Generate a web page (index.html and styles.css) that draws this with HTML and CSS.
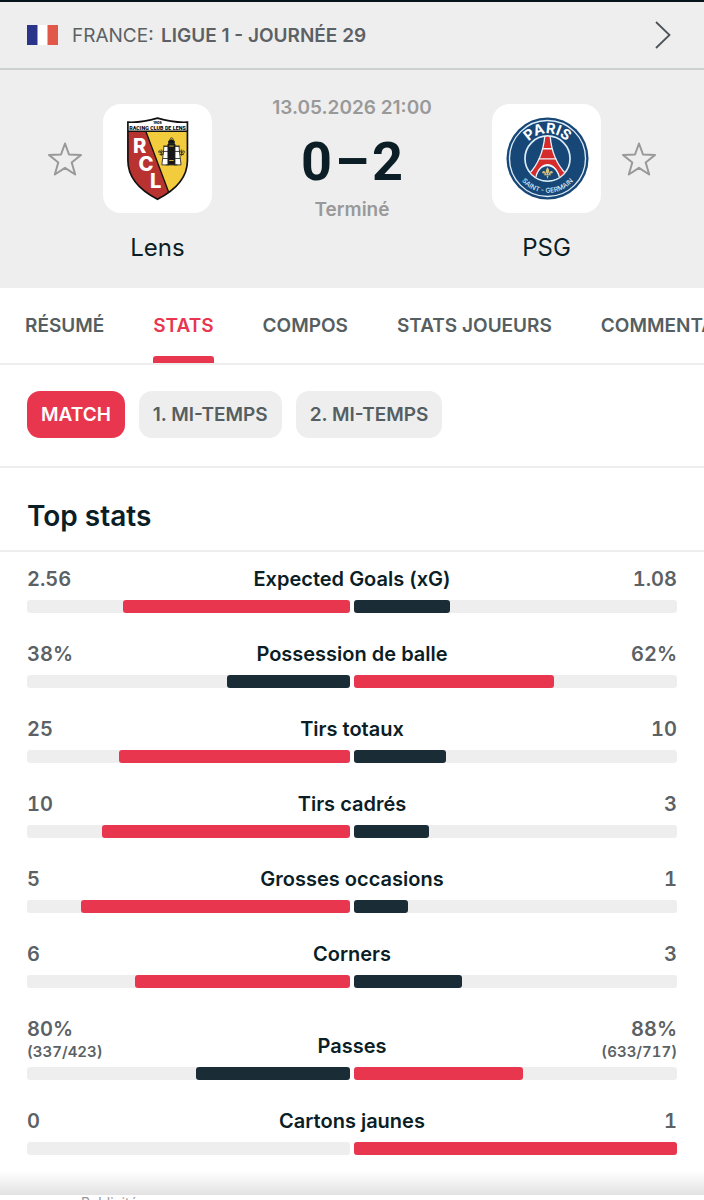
FILE: index.html
```html
<!DOCTYPE html>
<html lang="fr">
<head>
    <meta charset="UTF-8">
    <meta name="viewport" content="width=device-width, initial-scale=1.0">
    <title>Lens - PSG</title>
    <link rel="stylesheet" href="styles.css">
</head>
<body>
    <div class="page">
        <a href="#" class="league">
            <svg class="flag" viewBox="0 0 31 20" aria-hidden="true">
                <rect width="31" height="20" fill="#fff"/>
                <rect width="10.5" height="20" fill="#2b348b"/>
                <rect x="20.5" width="10.5" height="20" fill="#e1574a"/>
            </svg>
            <span class="league-name">FRANCE: <b>LIGUE 1 - JOURNÉE 29</b></span>
            <svg class="chevron" viewBox="0 0 18 30" aria-hidden="true">
                <path d="M2 2 L15.500 15 L2 28" fill="none" stroke="#4d5358" stroke-width="1.800"/>
            </svg>
        </a>

        <header class="match">
            <button class="star" aria-label="Suivre Lens">
                <svg viewBox="0 0 36 36"><path d="M18 2.500 L22 13.500 L34 14 L24.700 21.500 L28.200 33.500 L18 26.800 L7.800 33.500 L11.300 21.500 L2 14 L14 13.500 Z"/></svg>
            </button>
            <div class="team">
                <div class="logo">
                    <svg viewBox="9 12 324 324" aria-hidden="true">
                        <defs>
                            <clipPath id="shield">
                                <path d="M83 66 Q125 68 171 54 Q217 68 260 66 V180 Q260 250 171 295 Q83 250 83 180 Z"/>
                            </clipPath>
                        </defs>
                        <g clip-path="url(#shield)">
                            <rect x="80" y="50" width="184" height="250" fill="#f3cc3d"/>
                            <path d="M80 92 H136 L206 280 L171 300 H80 Z" fill="#b8322f"/>
                            <path d="M136 92 L207 282" stroke="#111" stroke-width="4"/>
                            <rect x="80" y="50" width="184" height="42" fill="#fff"/>
                            <path d="M80 93 H264" stroke="#111" stroke-width="4"/>
                        </g>
                        <path d="M83 66 Q125 68 171 54 Q217 68 260 66 V180 Q260 250 171 295 Q83 250 83 180 Z" fill="none" stroke="#111" stroke-width="5"/>
                        <text x="171" y="71" class="crest-year">1906</text>
                        <text x="171" y="88" class="crest-name">RACING CLUB DE LENS</text>
                        <g class="crest-letters">
                            <text x="118" y="158">R</text>
                            <text x="137" y="212">C</text>
                            <text x="166" y="263">L</text>
                        </g>
                        <!-- miner's lamp between two pit towers -->
                        <g stroke="#222" stroke-width="2.500">
                            <path d="M190 138 H205 V193 H184 L188 160 Z M220 138 H235 L237 160 L241 193 H220 Z" fill="#fff"/>
                            <path d="M188 137 H207 M219 137 H238 M190 153 H203 M222 153 H236 M187 174 H202 M223 174 H238" fill="none"/>
                            <path d="M204 122 Q212 114 221 122 V130 H204 Z M202 131 H223 V192 H202 Z" fill="#161616"/>
                            <path d="M207 118 Q213 107 219 118 M196 193 H230" fill="none"/>
                            <path d="M206 137 H219 M206 180 H219" stroke="#f3cc3d"/>
                            <path d="M182 147 V166 M176 158 Q172 150 178 151 L182 158 L187 151 Q192 152 187 160 M243 147 V166 M237 158 Q233 150 239 151 L243 158 L248 151 Q254 152 248 160" fill="none"/>
                            <path d="M177 162 H188 M238 162 H249" fill="none"/>
                        </g>
                    </svg>
                </div>
                <a href="#" class="team-name">Lens</a>
            </div>

            <div class="result">
                <div class="date">13.05.2026 21:00</div>
                <div class="score"><span>0</span><span>–</span><span>2</span></div>
                <div class="status">Terminé</div>
            </div>

            <div class="team">
                <div class="logo">
                    <svg viewBox="6 12 324 324" aria-hidden="true">
                        <defs>
                            <path id="arc-top" d="M96 174 A75 75 0 0 1 246 174"/>
                            <path id="arc-bottom" d="M69 174 A102 102 0 0 0 273 174"/>
                            <clipPath id="inner"><circle cx="171" cy="174" r="65"/></clipPath>
                        </defs>
                        <circle cx="171" cy="174" r="122" fill="#174777"/>
                        <circle cx="171" cy="174" r="113" fill="none" stroke="#dcecf8" stroke-width="4"/>
                        <circle cx="171" cy="174" r="67" fill="#174777" stroke="#dcecf8" stroke-width="5"/>
                        <g clip-path="url(#inner)">
                            <path d="M163 108 H179 C182 148 197 190 226 220 L205 236 C200 178 142 178 138 236 L116 220 C145 190 159 148 163 108 Z" fill="#d52b2b" stroke="#eaf2fa" stroke-width="4"/>
                            <path d="M157 145 H185 M145 175 H197" stroke="#eaf2fa" stroke-width="4"/>
                            <path d="M135 242 C137 179 204 179 208 242 Z" fill="#174777" stroke="#eaf2fa" stroke-width="4"/>
                        </g>
                        <!-- fleur-de-lis -->
                        <path d="M171 200 Q162 211 169 219 Q171 222 173 219 Q180 211 171 200 Z M167 220 Q165 209 157 212 Q152 217 160 219 Q158 213 164 221 Z M175 220 Q177 209 185 212 Q190 217 182 219 Q184 213 178 221 Z M161 221 H181 V224 H161 Z M168 225 H174 L171 235 Z" fill="#d8c17b"/>
                        <text class="psg-top"><textPath href="#arc-top" startOffset="50%">PARIS</textPath></text>
                        <text class="psg-bottom"><textPath href="#arc-bottom" startOffset="50%">SAINT - GERMAIN</textPath></text>
                    </svg>
                </div>
                <a href="#" class="team-name">PSG</a>
            </div>
            <button class="star" aria-label="Suivre PSG">
                <svg viewBox="0 0 36 36"><path d="M18 2.500 L22 13.500 L34 14 L24.700 21.500 L28.200 33.500 L18 26.800 L7.800 33.500 L11.300 21.500 L2 14 L14 13.500 Z"/></svg>
            </button>
        </header>

        <nav class="tabs">
            <a href="#">RÉSUMÉ</a>
            <a href="#" class="active">STATS</a>
            <a href="#">COMPOS</a>
            <a href="#">STATS JOUEURS</a>
            <a href="#">COMMENTAIRES</a>
        </nav>

        <div class="periods">
            <button class="selected">MATCH</button>
            <button>1. MI-TEMPS</button>
            <button>2. MI-TEMPS</button>
        </div>

        <h2>Top stats</h2>

        <section class="stats">
            <div class="stat">
                <div class="stat-head"><span class="value">2.56</span><span class="label">Expected Goals (xG)</span><span class="value">1.08</span></div>
                <div class="bars">
                    <div class="track home"><div class="fill best" style="width: 70.3%"></div></div>
                    <div class="track"><div class="fill" style="width: 29.7%"></div></div>
                </div>
            </div>
            <div class="stat">
                <div class="stat-head"><span class="value">38%</span><span class="label">Possession de balle</span><span class="value">62%</span></div>
                <div class="bars">
                    <div class="track home"><div class="fill" style="width: 38%"></div></div>
                    <div class="track"><div class="fill best" style="width: 62%"></div></div>
                </div>
            </div>
            <div class="stat">
                <div class="stat-head"><span class="value">25</span><span class="label">Tirs totaux</span><span class="value">10</span></div>
                <div class="bars">
                    <div class="track home"><div class="fill best" style="width: 71.4%"></div></div>
                    <div class="track"><div class="fill" style="width: 28.6%"></div></div>
                </div>
            </div>
            <div class="stat">
                <div class="stat-head"><span class="value">10</span><span class="label">Tirs cadrés</span><span class="value">3</span></div>
                <div class="bars">
                    <div class="track home"><div class="fill best" style="width: 76.9%"></div></div>
                    <div class="track"><div class="fill" style="width: 23.1%"></div></div>
                </div>
            </div>
            <div class="stat">
                <div class="stat-head"><span class="value">5</span><span class="label">Grosses occasions</span><span class="value">1</span></div>
                <div class="bars">
                    <div class="track home"><div class="fill best" style="width: 83.3%"></div></div>
                    <div class="track"><div class="fill" style="width: 16.7%"></div></div>
                </div>
            </div>
            <div class="stat">
                <div class="stat-head"><span class="value">6</span><span class="label">Corners</span><span class="value">3</span></div>
                <div class="bars">
                    <div class="track home"><div class="fill best" style="width: 66.7%"></div></div>
                    <div class="track"><div class="fill" style="width: 33.3%"></div></div>
                </div>
            </div>
            <div class="stat">
                <div class="stat-head"><span class="value">80% <small>(337/423)</small></span><span class="label">Passes</span><span class="value">88% <small>(633/717)</small></span></div>
                <div class="bars">
                    <div class="track home"><div class="fill" style="width: 47.7%"></div></div>
                    <div class="track"><div class="fill best" style="width: 52.3%"></div></div>
                </div>
            </div>
            <div class="stat">
                <div class="stat-head"><span class="value">0</span><span class="label">Cartons jaunes</span><span class="value">1</span></div>
                <div class="bars">
                    <div class="track home"></div>
                    <div class="track"><div class="fill best" style="width: 100%"></div></div>
                </div>
            </div>
        </section>

        <footer class="ad">Publicité</footer>
    </div>
</body>
</html>
```
FILE: styles.css
```css
* {
    box-sizing: border-box;
}

body {
    margin: 0;
    font-family: Inter, Roboto, "Liberation Sans", sans-serif;
    font-size: 19px;
    color: #0b1e26;
    background: #fff;
}

a {
    color: inherit;
    text-decoration: none;
}

button {
    font: inherit;
    border: none;
    cursor: pointer;
}

.page {
    height: 100vh;
    overflow: hidden;
    border-top: 2px solid #06141c;
}

/* league bar */
.league {
    display: flex;
    align-items: center;
    height: 68px;
    padding: 0 32px 0 27px;
    background: #eee;
    border-bottom: 2px solid #cdd0d1;
    color: #5b6164;
}

.flag {
    width: 31px;
    height: 20px;
    margin-right: 14px;
}

.league-name {
    flex: 1;
}

.league-name b {
    font-weight: 600;
    margin-left: 2px;
}

.chevron {
    width: 18px;
    height: 30px;
}

/* match header */
.match {
    display: flex;
    align-items: flex-start;
    gap: 20px;
    height: 218px;
    padding: 34px 47px 0;
    background: #eee;
}

.star {
    flex-shrink: 0;
    width: 36px;
    height: 36px;
    margin-top: 37px;
    padding: 0;
    background: none;
}

.star svg {
    display: block;
    fill: none;
    stroke: #999;
    stroke-width: 2;
    stroke-linejoin: round;
}

.team {
    display: flex;
    flex-direction: column;
    align-items: center;
    gap: 20px;
}

.logo {
    width: 109px;
    height: 109px;
    border-radius: 18px;
    background: #fff;
}

.logo svg {
    display: block;
}

.team-name {
    font-size: 24px;
    line-height: 30px;
}

.crest-year,
.crest-name,
.crest-letters,
.psg-top,
.psg-bottom {
    text-anchor: middle;
    font-weight: 800;
}

.crest-year {
    font-size: 10px;
}

.crest-name {
    font-family: Roboto, sans-serif;
    font-size: 16px;
}

.crest-letters {
    font-size: 60px;
    fill: #fff;
}

.psg-top {
    font-size: 43px;
    font-weight: 700;
    fill: #fff;
}

.psg-bottom {
    font-size: 20px;
    font-weight: 500;
    fill: #dcecf8;
}

.result {
    flex: 1;
    margin-top: -8px;
    text-align: center;
    font-weight: 600;
    line-height: 24px;
    color: #999;
}

.score {
    display: flex;
    justify-content: center;
    align-items: center;
    gap: 3px;
    height: 78px;
    padding-top: 6px;
    font-family: Roboto, sans-serif;
    font-size: 54px;
    font-weight: 700;
    color: #0b1e26;
}

/* tabs */
.tabs {
    display: flex;
    gap: 49px;
    height: 77px;
    padding: 0 25px;
    border-bottom: 2px solid #eee;
    overflow: hidden;
    font-weight: 600;
    white-space: nowrap;
    color: #555e61;
}

.tabs a {
    flex-shrink: 0;
    padding-top: 7px;
    line-height: 61px;
}

.tabs .active {
    color: #e8364f;
}

.tabs .active::after {
    content: "";
    display: block;
    height: 7px;
    border-radius: 3px 3px 0 0;
    background: #e8364f;
}

/* period filter */
.periods {
    display: flex;
    gap: 14px;
    padding: 26px 27px 28px;
    border-bottom: 2px solid #eee;
}

.periods button {
    height: 47px;
    padding: 0 14px;
    border-radius: 13px;
    background: #eee;
    font-weight: 600;
    color: #555e61;
}

.periods .selected {
    background: #e8364f;
    color: #fff;
}

h2 {
    margin: 0;
    padding: 31px 27px 17px;
    border-bottom: 2px solid #eee;
    font-size: 28px;
    font-weight: 600;
    line-height: 34px;
}

/* stats */
.stats {
    display: flex;
    flex-direction: column;
    gap: 28px;
    padding: 14px 27px 40px;
    background: linear-gradient(to top, #e2e2e2, #fff 24px);
}

.stat {
    display: flex;
    flex-direction: column;
    gap: 5px;
}

.stat-head {
    display: grid;
    grid-template-columns: 1fr auto 1fr;
    align-items: end;
    min-height: 29px;
    font-size: 20px;
    font-weight: 600;
    line-height: 26px;
}

.value {
    align-self: start;
    font-variant-numeric: tabular-nums;
    color: #5b6164;
}

.value:last-child {
    text-align: right;
}

.value small {
    display: block;
    font-size: 15px;
    line-height: 20px;
}

.label {
    padding-bottom: 3px;
}

.bars {
    display: grid;
    grid-template-columns: 1fr 1fr;
    gap: 4px;
}

.track {
    display: flex;
    height: 13px;
    border-radius: 3px;
    background: #eee;
}

.track.home {
    justify-content: flex-end;
}

.fill {
    border-radius: 3px;
    background: #1a2c35;
}

.fill.best {
    background: #e8364f;
}

.ad {
    padding: 0 81px;
    font-size: 14px;
    line-height: 16px;
    color: #999;
}
```
